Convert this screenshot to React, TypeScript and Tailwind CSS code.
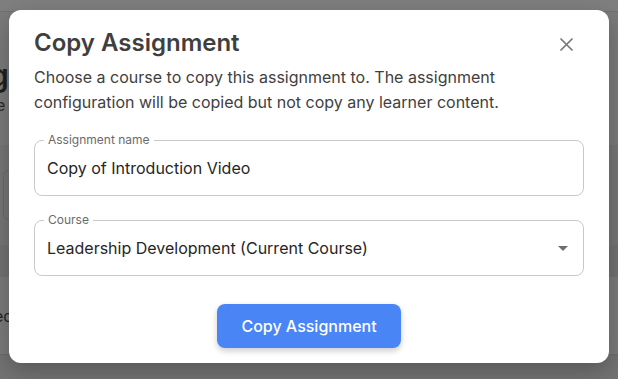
import React from "react";

function Field({ label, value, select }: { label: string; value: string; select?: boolean }) {
  return (
    <div className="relative h-[56px] rounded-[8px] border border-[#c9c9c9] flex items-center pl-[12px] pr-[14px]">
      <span className="absolute left-[9px] top-[-8px] bg-white px-[4px] text-[12px] leading-[14px] text-[#6b6b6b]">
        {label}
      </span>
      <span className="flex-1 text-[16px] leading-[24px] text-[#262626]">{value}</span>
      {select && (
        <svg width="10" height="5" viewBox="0 0 10 5" className="mr-[1px]">
          <path d="M0 0 L10 0 L5 5 Z" fill="#6f6f6f" />
        </svg>
      )}
    </div>
  );
}

export default function App() {
  return (
    <div
      className="relative h-[379px] w-[618px] overflow-hidden bg-[#7b7b7b]"
      style={{ fontFamily: "Inter, 'Noto Sans', sans-serif" }}
    >
      {/* underlying page, dimmed */}
      <div className="flex flex-col h-full">
        <div className="h-[12px] bg-[#7f7f7f] border-b border-[#707070]" />
        <div className="h-[133px] bg-[#7b7b7b]">
          <div className="mt-[48px] text-[30px] leading-[30px] font-semibold text-[#1f1f1f] -ml-[10px]">g</div>
          <div className="mt-[6px] text-[16px] leading-[18px] text-[#2a2a2a] -ml-[4px]">e</div>
        </div>
        <div className="h-[100px] bg-[#767676] flex items-center">
          <div className="ml-[3px] h-[50px] w-[20px] rounded-[6px] border border-[#6a6a6a]" />
        </div>
        <div className="h-[32px] bg-[#727272]" />
        <div className="h-[78px] bg-[#7b7b7b] flex items-center border-b border-[#6c6c6c]">
          <span className="text-[16px] text-[#232323] -ml-[6px]">ec</span>
        </div>
        <div className="flex-1 bg-[#737373]" />
      </div>

      {/* dialog */}
      <div className="absolute left-[9px] top-[10px] w-[600px] h-[353px] rounded-[12px] bg-white shadow-[0_8px_24px_rgba(0,0,0,0.25)] flex flex-col px-[25px] pt-[17px]">
        <div className="flex items-center justify-between">
          <h2 className="text-[24px] leading-[32px] font-semibold text-[#3f3f3f]">Copy Assignment</h2>
          <button className="mr-[10px] mt-[2px] w-[16px] h-[16px] flex items-center justify-center">
            <svg width="13" height="13" viewBox="0 0 13 13">
              <path d="M1 1 L12 12 M12 1 L1 12" stroke="#777" strokeWidth="1.7" strokeLinecap="round" />
            </svg>
          </button>
        </div>
        <p className="mt-[6px] text-[16px] leading-[25px] text-[#404040]">
          Choose a course to copy this assignment to. The assignment configuration will be copied but not copy any learner content.
        </p>
        <div className="mt-[25px] flex flex-col gap-[24px]">
          <Field label="Assignment name" value="Copy of Introduction Video" />
          <Field label="Course" value="Leadership Development (Current Course)" select />
        </div>
        <div className="mt-[28px] flex justify-center">
          <button className="h-[44px] w-[184px] rounded-[8px] bg-[#4a85f6] text-white text-[16px] font-medium shadow-[0_3px_6px_rgba(0,0,0,0.2)]">
            Copy Assignment
          </button>
        </div>
      </div>
    </div>
  );
}
